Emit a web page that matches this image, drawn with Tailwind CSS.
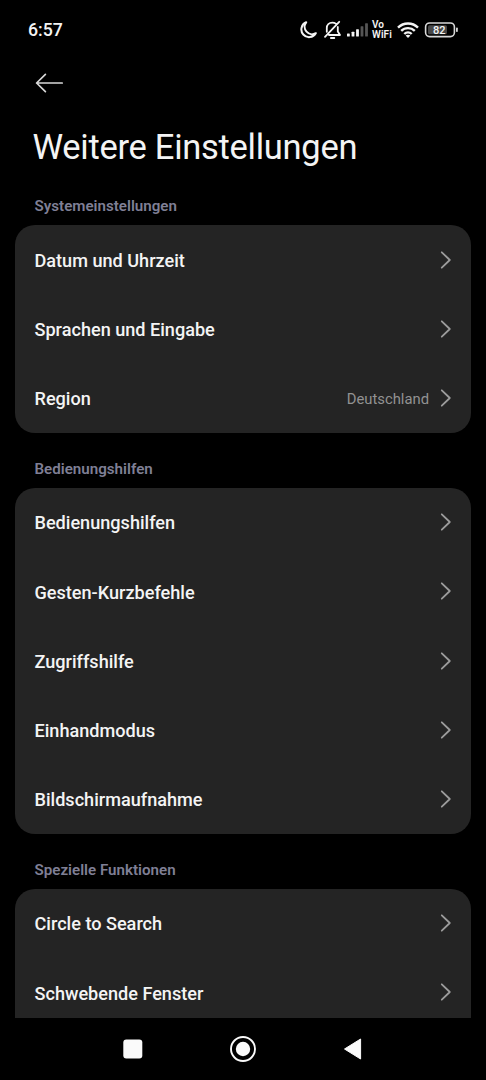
<!DOCTYPE html>
<html lang="de" class="h-full">
    <head>
        <meta charset="utf-8" />
        <title>Weitere Einstellungen</title>
        <meta name="viewport" content="width=device-width, initial-scale=1" />
        <script src="https://cdn.jsdelivr.net/npm/@tailwindcss/browser@4"></script>
    </head>
    <body class="flex flex-col h-[1080px] overflow-hidden bg-black text-[#f4f4f4] font-['Roboto',sans-serif]">
        <header class="shrink-0">
            <div class="flex items-center h-[60px] pl-[28px] pr-[28px]">
                <span class="pt-px text-[17.7px] font-medium">6:57</span>
                <div class="flex items-center ml-auto">
                    <!-- do not disturb -->
                    <svg class="w-[18px] h-[20px]" viewBox="0 0 18 20" fill="none" stroke="currentColor" stroke-width="2" stroke-linejoin="round">
                        <path d="M6.2 2.3A7.7 7.7 0 1 0 15.8 13.2A7.4 7.4 0 0 1 6.2 2.3Z" />
                    </svg>
                    <!-- muted -->
                    <svg class="w-[18px] h-[20px] ml-[6px]" viewBox="0 0 18 20" fill="none" stroke="currentColor" stroke-width="1.8" stroke-linecap="round" stroke-linejoin="round">
                        <path d="M2.8 11.8V8C2.8 4.7 5.1 2.6 8.3 2.6C9.9 2.6 11 3 11.8 3.6M13.8 7V11.5L16 15H5M1 16.8L15.2 1.8" />
                        <path d="M6.9 18H10.3" />
                    </svg>
                    <!-- mobile signal -->
                    <svg class="w-[21px] h-[20px] ml-[5px]" viewBox="0 0 21 20" fill="currentColor">
                        <rect x="0" y="13.5" width="2.8" height="3" rx=".6" />
                        <rect x="4.6" y="11.7" width="2.8" height="4.8" rx=".6" />
                        <rect x="9.1" y="9.2" width="2.8" height="7.3" rx=".6" />
                        <rect x="13.6" y="6.2" width="2.8" height="10.3" rx=".6" fill="#555" />
                        <rect x="18.1" y="3.2" width="2.8" height="13.3" rx=".6" fill="#555" />
                    </svg>
                    <div class="w-[21px] ml-[4px] text-[10px] leading-[10px] font-semibold tracking-[0.1px] whitespace-nowrap">Vo<br />WiFi</div>
                    <!-- wifi -->
                    <svg class="w-[22px] h-[18px] ml-[4px]" viewBox="0 0 22 18" fill="none" stroke="currentColor" stroke-width="2.4">
                        <path d="M1 6.6C6.6 1.1 15.4 1.1 21 6.6" />
                        <path d="M4.2 9.9C8 6.2 14 6.2 17.8 9.9" />
                        <path d="M7.3 13C9.4 11 12.6 11 14.7 13" />
                        <path d="M11 17L8.6 14.5C9.9 13.4 12.1 13.4 13.4 14.5Z" fill="currentColor" stroke="none" />
                    </svg>
                    <!-- battery -->
                    <svg class="w-[34px] h-[18px] ml-[5px]" viewBox="0 0 34 18">
                        <rect x="1.6" y="2" width="28.8" height="13.6" rx="4" fill="none" stroke="#d8d8d8" stroke-width="1.6" />
                        <rect x="4" y="4.3" width="19" height="9" rx="1.5" fill="#484848" />
                        <rect x="32" y="6.5" width="1.8" height="4.5" rx=".8" fill="#d8d8d8" />
                        <text x="15.3" y="12.8" text-anchor="middle" fill="#f4f4f4" class="text-[11px] font-medium">82</text>
                    </svg>
                </div>
            </div>

            <div class="flex items-center h-[45px] pl-[35px]">
                <svg class="w-[29px] h-[20px]" viewBox="0 0 29 20" fill="none" stroke="#d8d8d8" stroke-width="1.7" stroke-linecap="round" stroke-linejoin="round">
                    <path d="M27.2 10H1.6M10.4 1.3L1.6 10L10.4 18.7" />
                </svg>
            </div>

            <h1 class="h-[82px] pl-[32.5px] pt-[21px] text-[34.5px] leading-[42px] tracking-[-0.28px]">Weitere Einstellungen</h1>
        </header>

        <main id="settings" class="flex-1 min-h-0 overflow-hidden px-[15px]"></main>

        <nav class="flex items-center justify-between shrink-0 h-[62px] pl-[123px] pr-[124px]">
            <svg class="w-[20px] h-[20px]" viewBox="0 0 20 20" fill="#fafafa">
                <rect x=".3" y=".5" width="19" height="19" rx="3" />
            </svg>
            <svg class="w-[26px] h-[26px]" viewBox="0 0 26 26">
                <circle cx="13" cy="13" r="12" fill="none" stroke="#fafafa" stroke-width="1.9" />
                <circle cx="13" cy="13" r="7.2" fill="#fafafa" />
            </svg>
            <svg class="w-[19px] h-[22px]" viewBox="0 0 19 22" fill="#fafafa" stroke="#fafafa" stroke-linejoin="round">
                <path d="M17.6 1V21L1.5 11Z" />
            </svg>
        </nav>

        <script>
            const sections = [
                { title: 'Systemeinstellungen', rows: ['Datum und Uhrzeit', 'Sprachen und Eingabe', 'Region'] },
                { title: 'Bedienungshilfen', rows: ['Bedienungshilfen', 'Gesten-Kurzbefehle', 'Zugriffshilfe', 'Einhandmodus', 'Bildschirmaufnahme'] },
                { title: 'Spezielle Funktionen', rows: ['Circle to Search', 'Schwebende Fenster', ''] },
            ];
            const values = { Region: 'Deutschland' };

            const chevron = `
                <svg class="w-[12px] h-[18px]" viewBox="0 0 12 18" fill="none" stroke="#9c9c9c" stroke-width="1.8" stroke-linecap="round" stroke-linejoin="round">
                    <path d="M1.8 1.3L9.8 9L1.8 16.7" />
                </svg>`;

            function renderRow(name) {
                return `
                    <li class="flex items-center h-[69.2px] pl-[19.5px] pr-[19.5px]">
                        <span class="pt-[1.6px] text-[18.1px] font-medium">${name}</span>
                        <span class="ml-auto mr-[10.5px] pt-[2px] text-[14.8px] text-[#929292]">${values[name] || ''}</span>
                        ${chevron}
                    </li>`;
            }

            document.getElementById('settings').innerHTML = sections.map(({ title, rows }) => `
                <section class="mb-[17px]">
                    <h2 class="h-[38px] pl-[19.5px] pt-[9px] text-[15.15px] leading-[20px] font-semibold text-[#7f7f95]">${title}</h2>
                    <ul class="rounded-[20px] bg-[#242424]">${rows.map(renderRow).join('')}</ul>
                </section>`).join('');
        </script>
    </body>
</html>
